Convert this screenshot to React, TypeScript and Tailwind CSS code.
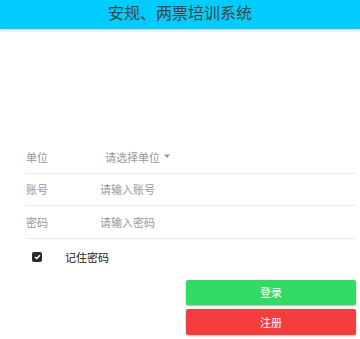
import { useState } from "react";

const font = { fontFamily: '"Noto Sans CJK SC", "Noto Sans", sans-serif' };

// 登录页
export default function App() {
  const [remember, setRemember] = useState(true);

  return (
    <div className="w-[360px] h-[339px] bg-white overflow-hidden relative" style={font}>
      {/* Header */}
      <div className="h-[29px] bg-[#00ccff] flex items-center justify-center shadow-[0_1px_3px_rgba(0,0,0,0.25)]">
        <span className="text-[16px] leading-none text-[#424242] -mt-[5px]">安规、两票培训系统</span>
      </div>

      {/* Form */}
      <div className="mt-[113px] ml-[26px] mr-[4px]">
        <div className="h-[32px] flex items-center border-b border-[#ebebeb]">
          <span className="w-[79px] text-[11px] text-[#999999]">单位</span>
          <span className="text-[11px] text-[#999999] flex items-center">
            请选择单位
            <svg width="8" height="5" viewBox="0 0 8 5" className="ml-[3px] -mt-[2px]">
              <path d="M1 0.5 L7 0.5 L4 4 Z" fill="#999999" />
            </svg>
          </span>
        </div>
        <div className="h-[32px] flex items-center border-b border-[#ebebeb]">
          <span className="w-[74px] text-[11px] text-[#999999]">账号</span>
          <input
            className="flex-1 text-[11px] text-[#333] placeholder:text-[#999999] outline-none bg-transparent"
            placeholder="请输入账号"
          />
        </div>
        <div className="h-[33px] flex items-center border-b border-[#ebebeb]">
          <span className="w-[74px] text-[11px] text-[#999999]">密码</span>
          <input
            type="password"
            className="flex-1 text-[11px] text-[#333] placeholder:text-[#999999] outline-none bg-transparent"
            placeholder="请输入密码"
          />
        </div>
      </div>

      {/* Remember */}
      <div className="mt-[13px] ml-[32px] flex items-center h-[10px]">
        <button
          onClick={() => setRemember(!remember)}
          className={`w-[10px] h-[10px] rounded-[2px] flex items-center justify-center ${remember ? "bg-[#2b2b2b]" : "border border-[#2b2b2b] bg-white"}`}
        >
          {remember && (
            <svg width="7" height="6" viewBox="0 0 7 6">
              <path d="M1 3 L2.8 4.6 L6 1.2" stroke="white" strokeWidth="1.4" fill="none" />
            </svg>
          )}
        </button>
        <span className="ml-[23px] text-[11px] text-[#222222]">记住密码</span>
      </div>

      {/* Buttons */}
      <div className="mt-[18px] ml-[186px] w-[170px] flex flex-col gap-[4px]">
        <button className="h-[25px] bg-[#32db64] text-white text-[11px] rounded-[2px] shadow-[0_1px_2px_rgba(0,0,0,0.3)]">
          登录
        </button>
        <button className="h-[26px] bg-[#f53d3d] text-white text-[11px] rounded-[2px] shadow-[0_1px_2px_rgba(0,0,0,0.3)]">
          注册
        </button>
      </div>
    </div>
  );
}
